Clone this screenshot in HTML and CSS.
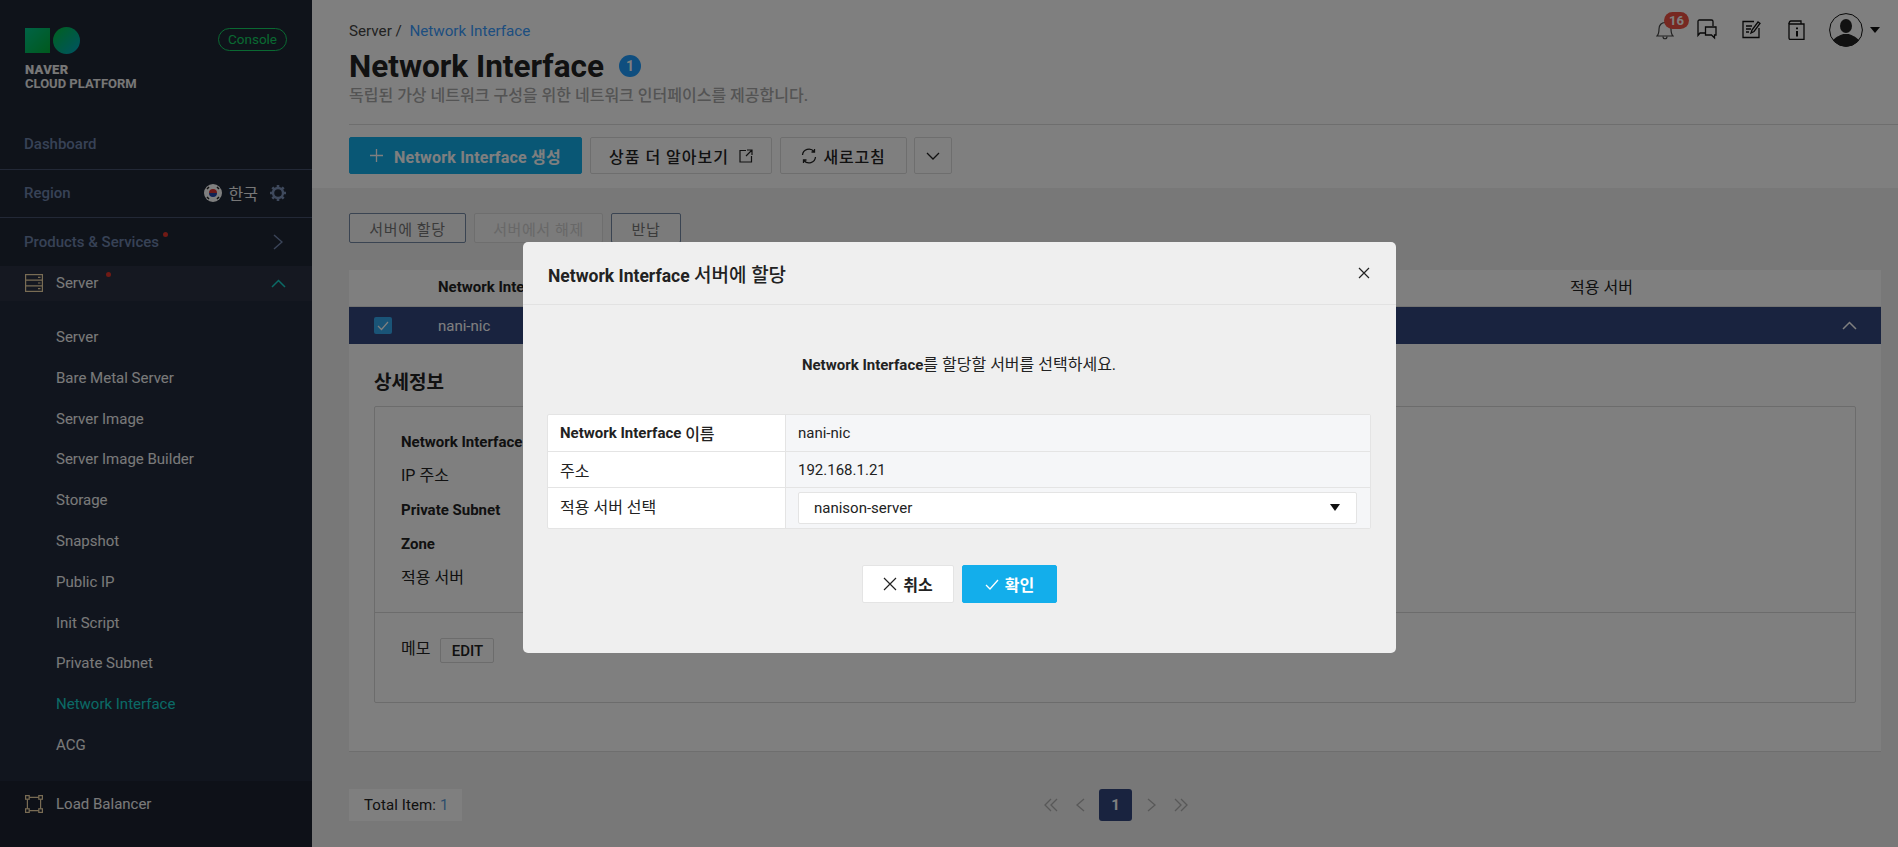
FILE: index.html
```html
<!doctype html>
<html lang="ko">
<head>
    <meta charset="UTF-8">
    <title>Network Interface</title>
    <link rel="stylesheet" href="styles.css">
</head>
<body>
    <div class="page">
        <aside class="sidebar">
            <div class="brand">
                <div class="logo">
                    <div class="logo-marks">
                        <span class="logo-square"></span>
                        <span class="logo-circle"></span>
                    </div>
                    <div class="logo-naver">NAVER</div>
                    <div class="logo-cloud">CLOUD PLATFORM</div>
                </div>
                <span class="console">Console</span>
            </div>
            <div class="side-row dashboard">Dashboard</div>
            <div class="side-row region">
                <span>Region</span>
                <span class="region-right">
                    <svg class="flag" width="18" height="18" viewBox="0 0 18 18">
                        <circle cx="9" cy="9" r="9" fill="#fff"/>
                        <path d="M5 9a4 4 0 0 1 8 0z" fill="#d33"/>
                        <path d="M5 9a4 4 0 0 0 8 0z" fill="#24a"/>
                        <path d="M3 5l2-2M3 13l2 2M15 5l-2-2M15 13l-2 2" stroke="#222" stroke-width="1.5"/>
                    </svg>
                    <span class="region-name">한국</span>
                    <svg width="18" height="18" viewBox="0 0 18 18" fill="none" stroke="#7d92b8">
                        <circle cx="9" cy="9" r="5" stroke-width="2.400"/>
                        <path d="M9 1v3M9 14v3M1 9h3M14 9h3M3.300 3.300l2.200 2.200M12.500 12.500l2.200 2.200M3.300 14.700l2.200-2.200M12.500 5.500l2.200-2.200" stroke-width="2.600"/>
                    </svg>
                </span>
            </div>
            <div class="side-row products">
                <span class="dotted">Products &amp; Services</span>
                <svg width="10" height="16" viewBox="0 0 10 16" fill="none" stroke="#7488b0" stroke-width="1.5"><path d="M1 1l8 7-8 7"/></svg>
            </div>
            <div class="side-group">
                <svg class="side-icon" width="18" height="18" viewBox="0 0 18 18" fill="none" stroke="#f2d9a8" stroke-width="1.2">
                    <rect x=".6" y=".6" width="16.8" height="16.8"/>
                    <path d="M.6 6.2h16.8M.6 11.8h16.8M13 3.4h2.5M13 9h2.5M13 14.6h2.5"/>
                </svg>
                <span class="dotted server-name">Server</span>
                <svg class="chev-up" width="15" height="9" viewBox="0 0 15 9" fill="none" stroke="#16d4cc" stroke-width="1.5"><path d="M1 8l6.500-6.500L14 8"/></svg>
            </div>
            <ul class="sub-menu">
                <li>Server</li>
                <li>Bare Metal Server</li>
                <li>Server Image</li>
                <li>Server Image Builder</li>
                <li>Storage</li>
                <li>Snapshot</li>
                <li>Public IP</li>
                <li>Init Script</li>
                <li>Private Subnet</li>
                <li class="active">Network Interface</li>
                <li>ACG</li>
            </ul>
            <div class="side-bottom">
                <svg class="side-icon" width="18" height="18" viewBox="0 0 18 18" fill="none" stroke="#f2d9a8" stroke-width="1.2">
                    <rect x=".6" y=".6" width="3.600" height="3.600"/>
                    <rect x="13.800" y=".6" width="3.600" height="3.600"/>
                    <rect x=".6" y="13.800" width="3.600" height="3.600"/>
                    <rect x="13.800" y="13.800" width="3.600" height="3.600"/>
                    <path d="M4.200 2.400h9.600M4.200 15.600h9.600M2.400 4.200v9.600M15.600 4.200v9.600"/>
                </svg>
                <span class="server-name">Load Balancer</span>
            </div>
        </aside>

        <main class="main">
            <header class="top">
                <div class="top-icons">
                    <span class="bell">
                        <svg width="18" height="22" viewBox="0 0 18 22" fill="none" stroke="#444" stroke-width="1.200">
                            <path d="M1 17c2-2 2-4 2-7 0-4 2.500-6.500 6-6.500s6 2.500 6 6.500c0 3 0 5 2 7z"/>
                            <path d="M7 17.500c0 3 4 3 4 0"/>
                        </svg>
                        <span class="badge">16</span>
                    </span>
                    <svg class="ti-chat" width="22" height="22" viewBox="0 0 22 22" fill="none" stroke="#111" stroke-width="1.300">
                        <path d="M9 14H4l-2 2.500V2.500C2 1.500 2.500 1 3.500 1h12c1 0 1.500.5 1.500 1.500V7"/>
                        <path d="M9.500 8h10.500v8h-1.500v3l-3-3H9.500z"/>
                    </svg>
                    <svg class="ti-note" width="19" height="19" viewBox="0 0 19 19" fill="none" stroke="#111" stroke-width="1.300">
                        <path d="M12 1.500H1v16h16V8"/>
                        <path d="M4 6h6M4 9h5M4 12h3"/>
                        <path d="M9 13l1-3 6-8 2 1.500-6 8z" fill="#fff"/>
                    </svg>
                    <svg class="ti-info" width="17" height="20" viewBox="0 0 17 20" fill="none" stroke="#111" stroke-width="1.300">
                        <path d="M1 4v14c0 1 .5 1.500 1.500 1.500H16V4z"/>
                        <path d="M1 4c0-2 1-3 2-3h10v3"/>
                        <path d="M9 7.500v1.800M9 11v5.500" stroke-width="2"/>
                    </svg>
                    <span class="avatar">
                        <svg width="34" height="34" viewBox="0 0 34 34">
                            <circle cx="17" cy="17" r="16.400" fill="#fff" stroke="#111" stroke-width="1"/>
                            <ellipse cx="17" cy="13" rx="6" ry="7" fill="#222"/>
                            <path d="M4 27c4-4 8-5 10-6h6c2 1 6 2 10 6-3 4-8 6.500-13 6.500S7 31 4 27z" fill="#222"/>
                        </svg>
                        <span class="caret"></span>
                    </span>
                </div>
                <div class="breadcrumb">Server /&nbsp; <a>Network Interface</a></div>
                <h1 class="title">Network Interface<span class="count">1</span></h1>
                <p class="desc">독립된 가상 네트워크 구성을 위한 네트워크 인터페이스를 제공합니다.</p>
                <div class="toolbar">
                    <button class="btn btn-primary btn-create">
                        <svg width="13" height="13" viewBox="0 0 13 13" stroke="#fff" stroke-width="1.300"><path d="M6.500 0v13M0 6.500h13"/></svg>
                        Network Interface 생성
                    </button>
                    <button class="btn btn-info">상품 더 알아보기
                        <svg width="14" height="14" viewBox="0 0 14 14" fill="none" stroke="#222" stroke-width="1.200"><path d="M7 1.500H1v11.500h11.500V7M8 1h5v5M13 1L7 7"/></svg>
                    </button>
                    <button class="btn btn-refresh">
                        <svg width="16" height="16" viewBox="0 0 16 16" fill="none" stroke="#222" stroke-width="1.300"><path d="M1.500 7A6.500 6.500 0 0 1 13 3.500M14.500 9A6.500 6.500 0 0 1 3 12.500M13.500 1v3h-3M2.500 15v-3h3"/></svg>
                        새로고침
                    </button>
                    <button class="btn btn-more">
                        <svg width="14" height="8" viewBox="0 0 14 8" fill="none" stroke="#222" stroke-width="1.300"><path d="M1 1l6 6 6-6"/></svg>
                    </button>
                </div>
            </header>

            <section class="content">
                <div class="actions">
                    <button class="act act-assign">서버에 할당</button>
                    <button class="act act-off">서버에서 해제</button>
                    <button class="act act-return">반납</button>
                </div>
                <div class="card">
                    <div class="thead">
                        <span></span>
                        <span class="th-name">Network Interface 이름</span>
                        <span class="th-light">적용 서버</span>
                    </div>
                    <div class="trow">
                        <span class="check">
                            <svg width="12" height="10" viewBox="0 0 12 10" fill="none" stroke="#fff" stroke-width="1.200"><path d="M1 5l3.500 3.500L11 1"/></svg>
                        </span>
                        <span class="trow-name">nani-nic</span>
                        <svg class="trow-up" width="15" height="9" viewBox="0 0 15 9" fill="none" stroke="#fff" stroke-width="1.500"><path d="M1 8l6.500-6.500L14 8"/></svg>
                    </div>
                    <div class="detail">
                        <h2 class="detail-title">상세정보</h2>
                        <div class="detail-box">
                            <dl class="detail-list">
                                <dt>Network Interface 이름</dt>
                                <dt class="light">IP 주소</dt>
                                <dt>Private Subnet</dt>
                                <dt>Zone</dt>
                                <dt class="light">적용 서버</dt>
                            </dl>
                            <div class="memo">
                                <span>메모</span>
                                <button class="edit">EDIT</button>
                            </div>
                        </div>
                    </div>
                </div>
                <div class="foot">
                    <span class="total">Total Item: <em>1</em></span>
                    <div class="pager">
                        <svg width="14" height="14" viewBox="0 0 14 14" fill="none" stroke="#b0b0b0" stroke-width="1.300"><path d="M7 1L1 7l6 6M13 1L7 7l6 6"/></svg>
                        <svg class="pg-prev" width="9" height="14" viewBox="0 0 9 14" fill="none" stroke="#b0b0b0" stroke-width="1.300"><path d="M8 1L1 7l7 6"/></svg>
                        <span class="pg-now">1</span>
                        <svg class="pg-next" width="9" height="14" viewBox="0 0 9 14" fill="none" stroke="#b0b0b0" stroke-width="1.300"><path d="M1 1l7 6-7 6"/></svg>
                        <svg width="14" height="14" viewBox="0 0 14 14" fill="none" stroke="#b0b0b0" stroke-width="1.300"><path d="M1 1l6 6-6 6M7 1l6 6-6 6"/></svg>
                    </div>
                </div>
            </section>
        </main>
    </div>

    <div class="dim"></div>

    <div class="modal">
        <div class="modal-head">
            <h3>Network Interface <span class="kr">서버에 할당</span></h3>
            <svg width="12" height="12" viewBox="0 0 12 12" stroke="#222" stroke-width="1.200"><path d="M1 1l10 10M11 1L1 11"/></svg>
        </div>
        <div class="modal-body">
            <p class="modal-msg"><b>Network Interface</b>를 할당할 서버를 선택하세요.</p>
            <div class="form">
                <div class="form-label strong">Network Interface <span class="kr16">이름</span></div>
                <div class="form-value">nani-nic</div>
                <div class="form-label">주소</div>
                <div class="form-value">192.168.1.21</div>
                <div class="form-label">적용 서버 선택</div>
                <div class="form-value">
                    <div class="select">nanison-server<span class="select-caret"></span></div>
                </div>
            </div>
            <div class="modal-btns">
                <button class="m-btn m-cancel">
                    <svg width="14" height="14" viewBox="0 0 14 14" stroke="#222" stroke-width="1.200"><path d="M1 1l12 12M13 1L1 13"/></svg>
                    취소
                </button>
                <button class="m-btn m-ok">
                    <svg width="14" height="11" viewBox="0 0 14 11" fill="none" stroke="#fff" stroke-width="1.300"><path d="M1 6l4 4 8-9"/></svg>
                    확인
                </button>
            </div>
        </div>
    </div>
</body>
</html>
```

FILE: styles.css
```css
*{
    box-sizing: border-box;
}
html,body{
    height: 100%;
}
body{
    margin: 0;
    overflow: hidden;
    font-family: Roboto, "Noto Sans CJK KR", sans-serif;
    font-size: 15px;
    color: #222;
    background-color: #f0f0f0;
}
ul,dl,dt,p,h1,h2,h3{
    margin: 0;
    padding: 0;
}
li{
    list-style: none;
}
button{
    font-family: inherit;
    cursor: pointer;
}
.page{
    display: flex;
    height: 847px;
}

/* sidebar */
.sidebar{
    flex: 0 0 312px;
    display: flex;
    flex-direction: column;
    background-color: #1e2634;
    color: #f4f4f4;
    font-weight: 500;
}
.brand{
    height: 120px;
    padding: 27px 25px 0;
    display: flex;
    justify-content: space-between;
    align-items: flex-start;
}
.logo-marks{
    display: flex;
    align-items: center;
    gap: 3px;
    height: 27px;
}
.logo-square{
    width: 25px;
    height: 25px;
    background: linear-gradient(135deg, #00c78c, #00b33a);
}
.logo-circle{
    width: 27px;
    height: 27px;
    border-radius: 50%;
    background: linear-gradient(135deg, #00c33c, #00a6c8);
}
.logo-naver,.logo-cloud{
    font-size: 13px;
    line-height: 14px;
    font-weight: 700;
    color: #eee;
}
.logo-naver{
    margin-top: 9px;
    font-weight: 900;
    letter-spacing: .3px;
}
.console{
    margin: 1px 0 0;
    width: 69px;
    height: 23px;
    border: 1.500px solid #14d264;
    border-radius: 12px;
    color: #14d264;
    font-size: 13.500px;
    font-weight: 400;
    line-height: 20px;
    text-align: center;
}
.side-row{
    display: flex;
    justify-content: space-between;
    align-items: center;
    padding: 0 25px 0 24px;
    color: #6f84ad;
    font-size: 15px;
}
.dashboard{
    height: 50px;
    padding-bottom: 2px;
    border-bottom: 1px solid #44506c;
}
.region{
    height: 48px;
    padding-bottom: 1px;
    border-bottom: 1px solid #44506c;
}
.region-right{
    display: flex;
    align-items: center;
}
.region-name{
    margin: 0 11px 0 7px;
    color: #eee;
    font-size: 16px;
    font-weight: 400;
}
.products{
    height: 48px;
    padding-right: 29px;
}
.dotted{
    position: relative;
}
.dotted::after{
    content: "";
    position: absolute;
    top: -1px;
    right: -9px;
    width: 5px;
    height: 5px;
    border-radius: 50%;
    background-color: #e0342a;
}
.server-name.dotted::after{
    top: -2px;
    right: -13px;
}
.side-group{
    height: 35px;
    display: flex;
    align-items: center;
    padding: 0 26px 1px 25px;
    background-color: #2a3142;
}
.side-icon{
    margin-right: 13px;
}
.server-name{
    font-size: 15px;
    font-weight: 400;
    color: #f4f4f4;
}
.chev-up{
    margin-left: auto;
}
.sub-menu{
    padding: 16px 0 15px 56px;
    background-color: #222a3c;
    font-size: 15px;
    font-weight: 400;
}
.sub-menu li{
    height: 40.800px;
    line-height: 40.800px;
}
.sub-menu .active{
    color: #16d4cc;
}
.side-bottom{
    flex: 1;
    display: flex;
    align-items: flex-start;
    padding: 14px 25px 0;
    background-color: #1c2230;
}

/* main */
.main{
    flex: 1;
    min-width: 0;
}
.top{
    position: relative;
    height: 188px;
    padding: 22px 0 0 37px;
    background-color: #fff;
}
.top-icons{
    position: absolute;
    top: 13px;
    right: 18px;
    display: flex;
    align-items: center;
    height: 33px;
}
.bell{
    position: relative;
    display: flex;
    margin-right: 22px;
}
.badge{
    position: absolute;
    top: -7px;
    left: 8px;
    width: 25px;
    height: 17px;
    border-radius: 9px;
    background-color: #ee5142;
    color: #fff;
    font-size: 13px;
    font-weight: 700;
    line-height: 17px;
    text-align: center;
}
.ti-chat{
    margin-right: 24px;
}
.ti-note{
    margin-right: 27px;
}
.ti-info{
    margin-right: 24px;
}
.avatar{
    display: flex;
    align-items: center;
    gap: 7px;
}
.caret{
    width: 0;
    height: 0;
    border-left: 5px solid transparent;
    border-right: 5px solid transparent;
    border-top: 6px solid #111;
}
.breadcrumb{
    line-height: 18px;
    font-size: 15.200px;
    color: #444;
}
.breadcrumb a{
    color: #3a9cff;
}
.title{
    display: flex;
    align-items: center;
    margin-top: 6px;
    height: 40px;
    font-size: 31.500px;
    font-weight: 700;
    color: #222;
}
.count{
    width: 22px;
    height: 22px;
    margin-left: 15px;
    border-radius: 50%;
    background-color: #1e9cff;
    color: #fff;
    font-size: 14px;
    line-height: 22px;
    text-align: center;
}
.desc{
    margin-top: -1px;
    height: 40px;
    border-bottom: 1px solid #ddd;
    color: #a8a8a8;
    font-size: 16px;
    font-weight: 500;
    line-height: 22px;
}
.toolbar{
    display: flex;
    margin-top: 12px;
    gap: 8px;
}
.btn{
    height: 37px;
    padding: 0;
    border: 1px solid #ddd;
    border-radius: 2px;
    background-color: #fff;
    color: #222;
    font-size: 16px;
    font-weight: 500;
    display: flex;
    align-items: center;
    justify-content: center;
    gap: 10px;
}
.btn-primary{
    border-color: #13aeeb;
    background-color: #13aeeb;
    color: #fff;
    font-weight: 700;
    letter-spacing: .2px;
}
.btn-create{
    width: 233px;
    gap: 11px;
}
.btn-info{
    width: 182px;
    letter-spacing: 1px;
}
.btn-refresh{
    width: 127px;
    gap: 6px;
    letter-spacing: .8px;
}
.btn-more{
    width: 38px;
    margin-left: -1px;
}

/* list */
.content{
    padding: 25px 17px 0 37px;
}
.actions{
    display: flex;
    gap: 8px;
}
.act{
    height: 30px;
    padding: 0;
    border: 1px solid #7488a4;
    border-radius: 2px;
    background-color: #f6f6f6;
    color: #777;
    font-size: 15px;
    letter-spacing: .6px;
}
.act-assign{
    width: 117px;
}
.act-off{
    width: 129px;
    border-color: #ddd;
    color: #d0d0d0;
}
.act-return{
    width: 70px;
}
.card{
    margin-top: 27px;
    height: 482px;
    background-color: #fff;
    border-bottom: 1px solid #ddd;
}
.thead{
    display: grid;
    grid-template-columns: 89px 1132px 1fr;
    height: 37px;
    line-height: 35px;
    border-bottom: 1px solid #e4e4e4;
    font-weight: 700;
    font-size: 15px;
}
.th-name{
    width: 85px;
    overflow: hidden;
    white-space: nowrap;
}
.th-light{
    font-weight: 400;
    font-size: 16px;
}
.trow{
    display: flex;
    align-items: center;
    height: 37px;
    padding: 0 24px 0 25px;
    background-color: #32467f;
    color: #fff;
}
.check{
    width: 18px;
    height: 17px;
    margin-right: 46px;
    border-radius: 2px;
    background-color: #34a8ee;
    display: flex;
    align-items: center;
    justify-content: center;
}
.trow-up{
    margin-left: auto;
}
.detail{
    padding: 25px 25px 0;
}
.detail-title{
    font-size: 19px;
    font-weight: 700;
    line-height: 27px;
}
.detail-box{
    margin-top: 10px;
    height: 297px;
    border: 1px solid #d8d8d8;
    border-radius: 2px;
}
.detail-list{
    height: 206px;
    padding: 18px 26px 0;
    border-bottom: 1px solid #d8d8d8;
}
.detail-list dt{
    height: 34px;
    line-height: 34px;
    font-weight: 700;
}
.detail-list .light{
    font-weight: 400;
    font-size: 16px;
}
.memo{
    display: flex;
    align-items: flex-start;
    padding: 25px 26px 0;
    gap: 10px;
    font-size: 16px;
    line-height: 22px;
}
.edit{
    width: 54px;
    height: 25px;
    padding: 0;
    border: 1px solid #d8d8d8;
    border-radius: 2px;
    background-color: #fff;
    color: #222;
    font-size: 15px;
    font-weight: 500;
}
.foot{
    display: flex;
    margin-top: 37px;
}
.total{
    width: 113px;
    height: 32px;
    padding-left: 15px;
    background-color: #fff;
    line-height: 32px;
    letter-spacing: .1px;
    white-space: nowrap;
}
.total em{
    font-style: normal;
    color: #5a9bd8;
}
.pager{
    display: flex;
    align-items: center;
    margin-left: 582px;
}
.pg-prev{
    margin: 0 14px 0 18px;
}
.pg-next{
    margin: 0 18px 0 15px;
}
.pg-now{
    width: 33px;
    height: 32px;
    border-radius: 3px;
    background-color: #32467f;
    color: #fff;
    font-size: 15px;
    font-weight: 700;
    line-height: 32px;
    text-align: center;
}

/* dialog */
.dim{
    position: fixed;
    top: 0;
    left: 0;
    right: 0;
    bottom: 0;
    background-color: rgba(0,0,0,.5);
}
.modal{
    position: fixed;
    left: 523px;
    top: 242px;
    width: 873px;
    height: 411px;
    border-radius: 5px;
    background-color: #efefef;
    color: #222;
}
.modal-head{
    height: 63px;
    padding: 0 26px 0 25px;
    display: flex;
    justify-content: space-between;
    align-items: center;
    border-bottom: 1px solid #e2e2e2;
}
.modal-head h3{
    font-size: 17.500px;
    font-weight: 700;
    color: #222;
}
.kr{
    font-size: 19px;
    font-weight: 500;
}
.kr16{
    font-size: 16px;
    font-weight: 500;
}
.modal-body{
    padding: 50px 25px 0 24px;
}
.modal-msg{
    line-height: 20px;
    text-align: center;
    font-size: 16px;
    color: #222;
}
.modal-msg b{
    font-size: 15px;
}
.form{
    display: grid;
    grid-template-columns: 238px 1fr;
    grid-template-rows: 37px 36px 40px;
    margin-top: 39px;
    border: 1px solid #e4e4e4;
    border-radius: 2px;
    background-color: #fff;
}
.form-label,.form-value{
    display: flex;
    align-items: center;
    border-bottom: 1px solid #e4e4e4;
}
.form-label{
    padding-left: 12px;
    border-right: 1px solid #e4e4e4;
    font-size: 16px;
    font-weight: 400;
}
.form-value{
    padding-left: 12px;
    background-color: #f5f6f8;
    font-size: 15px;
}
.form-label:nth-last-child(2),.form-value:last-child{
    border-bottom: 0;
}
.form-label:nth-last-child(2){
    align-items: flex-start;
    padding-top: 6px;
}
.strong{
    font-size: 15px;
    font-weight: 700;
    white-space: pre-wrap;
}
.select{
    position: relative;
    width: 559px;
    height: 32px;
    padding-left: 15px;
    border: 1px solid #e4e4e4;
    border-radius: 2px;
    background-color: #fff;
    line-height: 30px;
}
.select-caret{
    position: absolute;
    top: 11px;
    right: 16px;
    width: 0;
    height: 0;
    border-left: 5px solid transparent;
    border-right: 5px solid transparent;
    border-top: 7px solid #111;
}
.modal-btns{
    display: flex;
    justify-content: center;
    gap: 8px;
    margin-top: 36px;
    padding-left: 1px;
}
.m-btn{
    height: 38px;
    padding: 0;
    border: 1px solid #e4e4e4;
    border-radius: 2px;
    font-size: 16px;
    font-weight: 700;
    display: flex;
    align-items: center;
    justify-content: center;
    gap: 6px;
}
.m-cancel{
    width: 92px;
    background-color: #fff;
    color: #222;
}
.m-ok{
    width: 95px;
    border-color: #13aeeb;
    background-color: #13aeeb;
    color: #fff;
}
```
